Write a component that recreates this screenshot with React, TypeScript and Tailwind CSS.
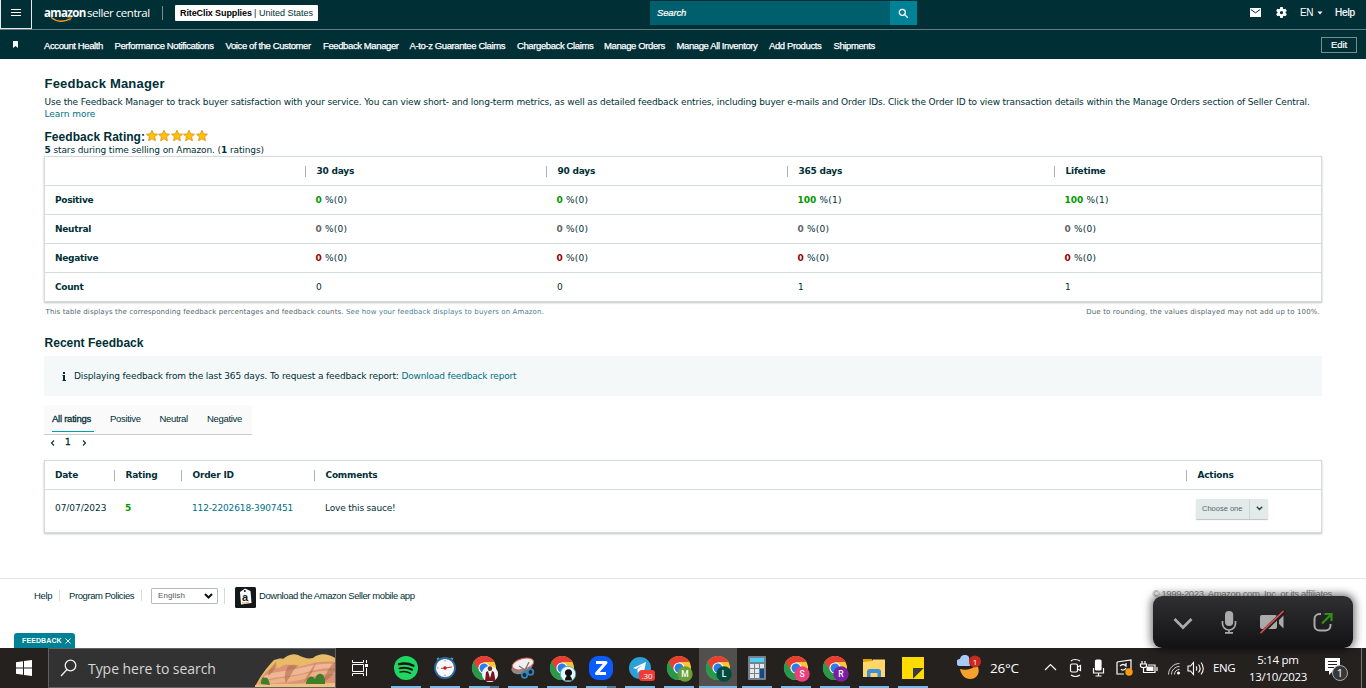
import type { ReactNode } from "react";
import clsx from "clsx";

const NAV = [
    { label: "Account Health", w: "w-[70.5px]" },
    { label: "Performance Notifications", w: "w-[111px]" },
    { label: "Voice of the Customer", w: "w-[97.5px]" },
    { label: "Feedback Manager", w: "w-[86.5px]" },
    { label: "A-to-z Guarantee Claims", w: "w-[107.5px]" },
    { label: "Chargeback Claims", w: "w-[87px]" },
    { label: "Manage Orders", w: "w-[72.5px]" },
    { label: "Manage All Inventory", w: "w-[92.5px]" },
    { label: "Add Products", w: "w-[64.5px]" },
    { label: "Shipments", w: "w-[60px]" },
];

const PERIODS = ["30 days", "90 days", "365 days", "Lifetime"];

const RATINGS = [
    { label: "Positive", color: "text-[#009900]", values: ["0", "0", "100", "100"], counts: [0, 0, 1, 1] },
    { label: "Neutral", color: "text-[#666666]", values: ["0", "0", "0", "0"], counts: [0, 0, 0, 0] },
    { label: "Negative", color: "text-[#990000]", values: ["0", "0", "0", "0"], counts: [0, 0, 0, 0] },
];

const COUNTS = [0, 0, 1, 1];

const SUMMARY_GRID = "grid grid-cols-[260px_241px_241px_267px_1fr] items-center";
const FEEDBACK_GRID = "grid grid-cols-[69px_67px_133px_872px_1fr] items-center";

function HeadCell({ children }: { children: ReactNode }) {
    return (
        <div className="h-[11px] border-l border-[#a9b4b4] pl-[10.5px] leading-[11px] font-bold tracking-[-0.22px]">{children}</div>
    );
}

function Star() {
    return (
        <svg width="12.6" height="12" viewBox="0 0 12.6 12">
            <path
                d="M6 .3 7.6 3.8l3.9.4-2.9 2.6.8 4L6 8.8l-3.4 2 .8-4L.5 4.2l3.9-.4z"
                fill="#ffc107"
                stroke="#d98e10"
                strokeWidth=".8"
                strokeLinejoin="round"
            />
        </svg>
    );
}

function TopBar() {
    return (
        <div className="flex h-[30px] border-b border-[#667b7e] text-white">
            <div className="flex h-[29px] w-[32px] items-center justify-center border-r border-b border-l border-white/90 pb-[4px]">
                <svg width="12" height="9" viewBox="0 0 12 9" stroke="#fff">
                    <path d="M1 1.5h10M1 4.5h10M1 7.5h10" />
                </svg>
            </div>
            <div className="relative ml-[12px] flex h-[25px] w-[118px] shrink-0 items-center font-['Open_Sans',sans-serif] text-[11.5px] whitespace-nowrap">
                <span className="w-[43px] font-bold tracking-[-0.62px]">amazon</span>
                <span className="tracking-[-0.45px]">seller central</span>
                <svg className="absolute top-[16px] left-[6px]" width="23" height="7" viewBox="0 0 23 7" fill="none" stroke="#f29b2c">
                    <path d="M1 1.5C7 6.3 14.5 6 20 2.8" strokeWidth="1.5" />
                    <path d="M17.5 1.3c2-.5 3.5-.6 3.6 0 .1.7-.5 2-1.3 3.1" strokeWidth="1" />
                </svg>
            </div>
            <div className="mt-[6px] h-[14px] w-px bg-[#7b8c8e]" />
            <div className="mt-[5px] ml-[12px] flex h-[16px] w-[143px] items-center rounded-[1px] bg-white pl-[5px] font-['Liberation_Sans',sans-serif] text-[9px] whitespace-nowrap text-[#002f36]">
                <b className="w-[74px] tracking-[-0.1px] text-black">RiteClix Supplies</b>
                <span className="w-[5px]">|</span>
                <span>United States</span>
            </div>
            <div className="mt-px ml-[332px] flex h-[24px] w-[240px] items-center bg-[#005f6d] pl-[7px] font-['Liberation_Sans',sans-serif] text-[9.5px] tracking-[-0.15px] italic [-webkit-text-stroke:0.2px_white]">
                Search
            </div>
            <div className="mt-px flex h-[24px] w-[27px] items-center justify-center bg-[#008296]">
                <svg width="11" height="11" viewBox="0 0 11 11" fill="none" stroke="#fff" strokeWidth="1.3">
                    <circle cx="4.3" cy="4.3" r="3" />
                    <path d="m6.5 6.5 3.3 3.3" />
                </svg>
            </div>
            <div className="ml-auto flex h-[25px] items-center pr-[11px] font-['Liberation_Sans',sans-serif] text-[10px] tracking-[-0.3px]">
                <svg width="11" height="9" viewBox="0 0 11 9">
                    <path d="M0 0h11v9H0z" fill="#fff" />
                    <path d="m.8 1.5 4.7 3.3 4.7-3.3" stroke="#002f36" fill="none" />
                </svg>
                <svg className="ml-[14px]" width="13" height="13" viewBox="0 0 24 24">
                    <path
                        fill="#fff"
                        d="M19.4 13a7.5 7.5 0 0 0 0-2l2.5-1.9-2.4-4.2-2.9 1.2a7.3 7.3 0 0 0-1.8-1L14.4 2H9.6l-.4 3.1a7.3 7.3 0 0 0-1.8 1L4.5 4.9 2.1 9.1 4.6 11a7.5 7.5 0 0 0 0 2l-2.5 1.9 2.4 4.2 2.9-1.2c.6.4 1.2.8 1.8 1l.4 3.1h4.8l.4-3.1c.6-.2 1.2-.6 1.8-1l2.9 1.2 2.4-4.2zM12 15a3 3 0 1 1 0-6 3 3 0 0 1 0 6z"
                    />
                </svg>
                <span className="ml-[12px] w-[17px]">EN</span>
                <svg width="6" height="4" viewBox="0 0 6 4">
                    <path d="M.5.5h5L3 3.5z" fill="#fff" />
                </svg>
                <span className="ml-[12px] w-[20px] tracking-[-0.15px] [-webkit-text-stroke:0.2px_white]">Help</span>
            </div>
        </div>
    );
}

function NavBar() {
    return (
        <div className="flex h-[29px] items-center font-['Liberation_Sans',sans-serif] text-[9.5px] tracking-[-0.39px] whitespace-nowrap text-white">
            <svg className="mr-[26px] ml-[13px]" width="5" height="7" viewBox="0 0 5 7">
                <path d="M0 0h5v7L2.5 5 0 7z" fill="#fff" />
            </svg>
            <div className="flex pt-[2px] [-webkit-text-stroke:0.25px_white]">
                {NAV.map((item) => (
                    <span key={item.label} className={item.w}>
                        {item.label}
                    </span>
                ))}
            </div>
            <div className="mr-[9px] ml-auto flex h-[16px] w-[36px] items-center justify-center border border-[#7b8c8e] tracking-[-0.1px] [-webkit-text-stroke:0.2px_white]">
                Edit
            </div>
        </div>
    );
}

function SummaryTable() {
    return (
        <div className="h-[146px] w-[1278px] border border-[#d5dbdb] shadow-[0_1px_2px_rgba(0,0,0,0.25)]">
            <div className={clsx(SUMMARY_GRID, "h-[28px]")}>
                <div />
                {PERIODS.map((p) => (
                    <HeadCell key={p}>{p}</HeadCell>
                ))}
            </div>
            {RATINGS.map((r) => (
                <div key={r.label} className={clsx(SUMMARY_GRID, "h-[29px] border-t border-[#d5dbdb]")}>
                    <b className="pl-[10px] tracking-[-0.28px]">{r.label}</b>
                    {r.values.map((v, i) => (
                        <div key={PERIODS[i]} className="pl-[10.5px] tracking-[0.25px]">
                            <b className={clsx("tracking-normal", r.color)}>{v}</b> %({r.counts[i]})
                        </div>
                    ))}
                </div>
            ))}
            <div className={clsx(SUMMARY_GRID, "h-[29px] border-t border-[#d5dbdb]")}>
                <b className="pl-[10px] tracking-[-0.28px]">Count</b>
                {COUNTS.map((c, i) => (
                    <div key={PERIODS[i]} className="pl-[11px]">
                        {c}
                    </div>
                ))}
            </div>
        </div>
    );
}

function FeedbackTable() {
    return (
        <div className="h-[73px] w-[1278px] border border-[#d5dbdb] shadow-[0_1px_2px_rgba(0,0,0,0.25)]">
            <div className={clsx(FEEDBACK_GRID, "h-[28px]")}>
                <b className="pl-[10px] tracking-[-0.22px]">Date</b>
                <HeadCell>Rating</HeadCell>
                <HeadCell>Order ID</HeadCell>
                <HeadCell>Comments</HeadCell>
                <HeadCell>Actions</HeadCell>
            </div>
            <div className={clsx(FEEDBACK_GRID, "h-[43px] border-t border-[#d5dbdb] pb-[6px]")}>
                <span className="pl-[10px] tracking-[-0.05px]">07/07/2023</span>
                <b className="pl-[11px] text-[#009900]">5</b>
                <span className="pl-[11px] tracking-[-0.14px] text-[#007185]">112-2202618-3907451</span>
                <span className="pl-[11px] tracking-[-0.18px]">Love this sauce!</span>
                <div className="mt-px ml-[10px] flex h-[20px] w-[72px] items-center rounded-[1px] bg-[#e3eaea] font-['Liberation_Sans',sans-serif] text-[7.5px] text-[#56686b] shadow-[0_1px_1px_rgba(0,0,0,0.25)]">
                    <span className="w-[53px] pl-[6px]">Choose one</span>
                    <span className="flex h-full w-[19px] items-center justify-center border-l border-[#cfd8d8]">
                        <svg width="7" height="5" viewBox="0 0 7 5" fill="none" stroke="#23444a" strokeWidth="1.4">
                            <path d="m.8.8 2.7 2.7L6.2.8" />
                        </svg>
                    </span>
                </div>
            </div>
        </div>
    );
}

function Footer() {
    return (
        <footer className="flex h-[38px] items-center border-t border-[#e3e6e6] font-['Liberation_Sans',sans-serif] text-[9.5px] tracking-[-0.42px] whitespace-nowrap text-[#002f36]">
            <span className="mb-[4px] ml-[34px] w-[25px] tracking-[-0.3px]">Help</span>
            <span className="mb-[4px] h-[11px] w-[82px] border-l border-[#d5dbdb] pl-[9px] leading-[11px]">Program Policies</span>
            <span className="mb-[4px] h-[11px] w-[10px] border-l border-[#d5dbdb]" />
            <div className="mb-[3px] flex h-[16px] w-[67px] items-center justify-between rounded-[1px] border border-[#b5bcbc] pr-[4px] pl-[6px] text-[8px] text-[#555]">
                <span className="tracking-[0.1px]">English</span>
                <svg width="9" height="6" viewBox="0 0 9 6" fill="none" stroke="#111" strokeWidth="2">
                    <path d="m1 1 3.5 3.5L8 1" />
                </svg>
            </div>
            <span className="mb-[4px] ml-[6px] h-[16px] w-[11px] border-l border-[#d5dbdb]" />
            <svg width="21" height="21" viewBox="0 0 21 21">
                <rect width="21" height="21" rx="1.5" fill="#15181b" />
                <path d="m5 5 5-3.500L15.500 4l1 12-10.500 1.500z" fill="#fff" />
                <circle cx="9.8" cy="4" r="1" fill="#15181b" />
                <text x="7" y="13.5" fontSize="11" fontWeight="bold" fontFamily="Liberation Sans" fill="#15181b">
                    a
                </text>
                <path d="M7 15.5c2.5 1 5 .7 7-.7" stroke="#f29b2c" fill="none" />
            </svg>
            <span className="mb-[4px] ml-[3px]">Download the Amazon Seller mobile app</span>
            <span className="mr-[34px] mb-[8px] ml-auto tracking-[-0.36px] text-[#888]">
                © 1999-2023, Amazon.com, Inc. or its affiliates
            </span>
        </footer>
    );
}

function CallWidget() {
    return (
        <div className="absolute top-[596px] left-[1153px] flex h-[52px] w-[200px] items-center rounded-[9px] bg-linear-to-b from-[#303033] to-[#131315] shadow-[0_0_8px_2px_rgba(0,0,0,0.55)]">
            <svg width="200" height="52" viewBox="0 0 200 52" fill="none">
                <path d="m21.5 23 8.5 8.5L38.5 23" stroke="#aaa" strokeWidth="2.7" />
                <rect x="72" y="15" width="8.2" height="15" rx="4.1" fill="#aaa" />
                <path d="M69.5 25v2.500a6.5 6.5 0 0 0 13 0V25M76 34v3M72 36.800h8" stroke="#aaa" strokeWidth="1.7" />
                <rect x="107" y="19" width="17" height="14" rx="2" fill="#aaa" />
                <path d="m126 24 4.5-4.500v13L126 28z" fill="#aaa" />
                <path d="m107.5 38 24-23" stroke="#202022" strokeWidth="3.5" />
                <path d="m107.5 37 23-22" stroke="#f05050" strokeWidth="1.5" />
                <path d="M168 18h-1.500a5 5 0 0 0-5 5v6.500a5 5 0 0 0 5 5h6a5 5 0 0 0 5-5V28" stroke="#aaa" strokeWidth="2" />
                <path d="m169 27.5 8.5-8.500M171.500 18h7v7" stroke="#33900f" strokeWidth="2.2" />
            </svg>
        </div>
    );
}

function Chrome({ badge, color }: { badge?: string; color?: string }) {
    return (
        <svg width="28" height="26" viewBox="-1 0 28 26">
            <circle cx="12" cy="12" r="12" fill="#fbc533" />
            <path d="M12 12 1.6 6A12 12 0 0 1 22.4 6H12z" fill="#e53e32" />
            <path d="M1.6 6A12 12 0 0 0 12 24l5.2-9L12 12 7 15z" fill="#27994b" />
            <path d="m1.6 6 5.2 9L12 12V6z" fill="#e53e32" />
            <path d="M1.6 6 7 15l5 3.5L12 24A12 12 0 0 1 1.6 6z" fill="#27994b" />
            <circle cx="12" cy="12" r="5.6" fill="#fff" />
            <circle cx="12" cy="12" r="4.5" fill="#2b7de9" />
            {badge && (
                <>
                    <circle cx="18" cy="18" r="7.7" fill={color} />
                    <text x="18" y="21" textAnchor="middle" fontSize="8.5" fontWeight="500" fontFamily="Roboto" fill="#fff">
                        {badge}
                    </text>
                </>
            )}
            {!badge && color && (
                <>
                    <circle cx="18" cy="18" r="7.7" fill="#eef8fa" stroke={color} strokeWidth=".8" />
                    {color === "#f5f5f5" ? (
                        <>
                            <path d="m13 25 1-9 4-2 4 2 1.5 9z" fill="#7c1523" />
                            <path d="m16 15 2 7 2-7z" fill="#fff" />
                            <circle cx="18" cy="12.5" r="2.3" fill="#5b3d31" />
                        </>
                    ) : (
                        <path d="M15 24.5c0-2 .5-3.500 2-4.500a3.600 3.600 0 1 1 3 0c1.200 1 2 2 2 4.500z" fill="#111" />
                    )}
                </>
            )}
        </svg>
    );
}

const APPS: { id: string; icon: ReactNode; active?: boolean; group?: boolean }[] = [
    {
        id: "spotify",
        icon: (
            <svg width="28" height="26" viewBox="0 0 28 26" fill="none" stroke="#191414" strokeLinecap="round">
                <circle cx="13" cy="12" r="12" fill="#1ed760" stroke="none" />
                <path d="M6 8.2c5-1.3 10-.8 14.5 1.6" strokeWidth="2.3" />
                <path d="M6.5 12.3c4.5-1.2 8.5-.7 12.5 1.4" strokeWidth="1.9" />
                <path d="M7 16c4-.9 7.3-.5 10.5 1.3" strokeWidth="1.5" />
            </svg>
        ),
    },
    {
        id: "clock",
        icon: (
            <svg width="28" height="26" viewBox="0 0 28 26">
                <path d="m5 3.5 2-1.5M21 3.5 19 2" stroke="#5d8fba" strokeWidth="2" />
                <circle cx="13" cy="12" r="10" fill="#f6f7f8" stroke="#2f68a1" strokeWidth="1.8" />
                <path d="M13 4v1.5M13 18.5V20M5 12h1.5" stroke="#888" />
                <path d="m9 12.5 11-1.5" stroke="#d6322b" strokeWidth="1.2" />
                <circle cx="13" cy="12" r="1.7" fill="#b8221d" />
            </svg>
        ),
    },
    { id: "chrome-photo", icon: <Chrome color="#f5f5f5" />, group: true },
    {
        id: "snip",
        icon: (
            <svg width="28" height="26" viewBox="0 0 28 26" fill="none">
                <ellipse cx="12" cy="11" rx="11" ry="6.5" fill="#8b8b8b" transform="rotate(-20 12 11)" />
                <ellipse cx="13" cy="8" rx="11" ry="5.5" fill="#f0f0f0" stroke="#d45b50" transform="rotate(-15 13 8)" />
                <path d="m9 10 9 6M19 6l-5 10" stroke="#777" strokeWidth="1.3" />
                <circle cx="14.5" cy="19" r="2.8" stroke="#2f86bd" strokeWidth="1.8" />
                <circle cx="20.5" cy="16" r="2.8" stroke="#2f86bd" strokeWidth="1.8" />
            </svg>
        ),
    },
    { id: "chrome-key", icon: <Chrome color="#39a9bd" /> },
    {
        id: "zoom",
        icon: (
            <svg width="28" height="26" viewBox="0 0 28 26">
                <rect x="1" width="24" height="24" rx="9" fill="#0b5cff" />
                <path d="M8 6.5h10L8.5 17.5H18" fill="none" stroke="#fff" strokeWidth="3" strokeLinejoin="round" />
            </svg>
        ),
        group: true,
    },
    {
        id: "telegram",
        icon: (
            <svg width="28" height="26" viewBox="-1 0 28 26">
                <circle cx="12" cy="12" r="11" fill="#2ca0d9" />
                <path d="m5 12 13-6-2.5 12-4-3-2 2v-4l5-4-6.5 4z" fill="#fff" />
                <rect x="11" y="14" width="16" height="11" rx="3" fill="#ef3b36" />
                <text x="19" y="22.5" textAnchor="middle" fontSize="8" fontFamily="Open Sans" fill="#fff">
                    .30
                </text>
            </svg>
        ),
    },
    { id: "chrome-m", icon: <Chrome badge="M" color="#689f38" /> },
    { id: "chrome-l", icon: <Chrome badge="L" color="#004d40" />, active: true },
    {
        id: "calculator",
        icon: (
            <svg width="28" height="26" viewBox="0 0 28 26">
                <rect x="4" width="18" height="24" rx="1" fill="#76818b" />
                <rect x="6" y="2" width="14" height="4" fill="#4dd0f5" />
                <path d="M6 8h4v4H6zM11 8h4v4h-4zM16 8h4v4h-4zM6 13h4v4H6zM11 13h4v4h-4zM6 18h4v4H6zM11 18h4v4h-4z" fill="#e4e8eb" />
                <path d="M16 13h4v9h-4z" fill="#114b8c" />
            </svg>
        ),
    },
    { id: "chrome-s", icon: <Chrome badge="S" color="#ec407a" /> },
    { id: "chrome-r", icon: <Chrome badge="R" color="#7b1fa2" /> },
    {
        id: "explorer",
        icon: (
            <svg width="28" height="26" viewBox="0 0 28 26">
                <path d="M2 3h9v4H2z" fill="#e0a000" />
                <path d="M2 6 11 5l1-1.5h12V21H2z" fill="#ffd667" />
                <path d="M6 21v-6.5L8 13h10l2 1.5V21h-3.5v-4h-7v4z" fill="#3c91dc" />
            </svg>
        ),
    },
    {
        id: "sticky-notes",
        icon: (
            <svg width="28" height="26" viewBox="0 0 28 26">
                <path d="M2 1h22v22H2z" fill="#ffdc00" />
                <path d="M13 12h11L13 23z" fill="#3b3b3b" />
                <path d="M24 12v11H13z" fill="#ffdc00" />
            </svg>
        ),
    },
];

function SearchArt() {
    return (
        <svg className="absolute right-0 bottom-0" width="80" height="33" viewBox="0 0 80 33">
            <path d="M0 33C4 24 12 13 19 6c4-1 7-2 9-1 4-3 8-6 15-4 6 3 10 4 15 3 6-5 14-5 22 0v29z" fill="#e9bb69" />
            <path d="M7 23C12 16 17 13 24 14c8-6 12-3 18-1 12-2 22-7 38-5v25H2z" fill="#dc9376" />
            <path d="M9 22c10-5 18-4 27-6 12-2 22-7 44-6v4c-17-1-27 5-41 7-9 2-20 2-32 6z" fill="#efb796" />
            <path d="M5 29c10-4 24-5 35-7 12-2 22-6 40-5v3c-17-1-27 5-41 7-9 2-20 2-35 4z" fill="#ebb289" />
            <path
                d="M14 16 21 8c2 4-3 10-8 14zM33 12c5-2 8-1 11-1-6 4-7 9-13 18-3-6 0-13 2-17zM61 8c-5 8-9 13-12 20 6-5 10-12 12-20zM80 8c-6 4-9 12-12 20 5-2 9-6 12-10z"
                fill="#ad6848"
                opacity=".55"
            />
            <path d="M0 33v-2c25-2 55-1 80-2v4z" fill="#eec27e" />
            <path d="M6 30c0-5 2-8 4-6 2-2 4 2 5 7zM51 30c1-9 7-9 9-5 2-7 8-7 10 0v5z" fill="#3f7f2c" />
        </svg>
    );
}

function Tray() {
    return (
        <div className="ml-auto flex h-full items-center">
            <svg width="25" height="26" viewBox="0 0 25 26">
                <path d="M3 14c6 2 12 0 17-4 4 6 1 14-7 14-5 0-9-4-10-10z" fill="#f5a12c" />
                <path d="M3 11a3.5 3.5 0 0 1 0-7 5 5 0 0 1 9-2l1 9z" fill="#a8c8f5" />
                <circle cx="18" cy="6.5" r="6" fill="#c92a20" />
                <text x="18" y="9.5" textAnchor="middle" fontSize="8" fontFamily="Open Sans" fill="#fff">
                    1
                </text>
            </svg>
            <span className="ml-[8px] w-[54px] text-[13.5px] tracking-[-0.2px]">26°C</span>
            <svg width="170" height="24" viewBox="0 0 170 24" fill="none" stroke="#fff" strokeWidth="1.2">
                <path d="m1 14 5.5-5.5L12 14" />
                <rect x="26.5" y="8" width="7" height="8" rx="1.5" />
                <path d="m33.5 11 3-1.5v5l-3-1.5M27 5c2-2 6-2 9 0M27 19c3 2 6 2 9 0" />
                <rect x="51.5" y="4" width="5.5" height="10" rx="1" fill="#fff" />
                <path d="M49.5 12v5h10v-5M54.5 17v3M51.5 20h6" />
                <path d="m73 6 14-2v9M73 6v12h7M76 10c2-2 4-2 6 0V7M82 12c-1 2-4 3-5 1" />
                <circle cx="85" cy="16" r="3.7" fill="#ff9b0a" stroke="none" />
                <path d="M98 5v3M101 5v3M96.5 8h6v2c0 2-6 2-6 0zM99.5 12v4.5H111V9h-7M113 11v4" />
                <path d="M102.5 10.5h7v4.5h-7z" fill="#fff" stroke="none" />
                <path d="M124.5 18.5c0-6 5-11 11-11M127.5 18.5c0-4.5 3.5-8 8-8M130.5 18.5c0-3 2-5 5-5" opacity=".8" strokeWidth="1" />
                <circle cx="134.5" cy="17" r="1.5" fill="#fff" stroke="none" />
                <path
                    d="M144 10h2.5l3-3.5v12l-3-3.5H144zM152 10.5c1 1 1 3 0 4M154.5 8.5c2 2.500 2 5.500 0 8M157 6.500c3 3.500 3 8.500 0 12"
                    strokeWidth="1.1"
                />
            </svg>
            <span className="-ml-px w-[30px] text-[11.5px] tracking-[-0.35px]">ENG</span>
            <div className="flex w-[65px] flex-col items-center pl-[5px] text-[11.5px] leading-[17px] tracking-[-0.3px] whitespace-nowrap">
                <span>5:14 pm</span>
                <span>13/10/2023</span>
            </div>
            <svg className="ml-[16px]" width="26" height="28" viewBox="0 0 26 28">
                <path d="M1 4h15v13H9l-4 4v-4H1z" fill="#fff" />
                <path d="M4 7.5h9M4 10.5h9M4 13.5h6" stroke="#24211f" strokeWidth="1.1" />
                <circle cx="16" cy="19" r="7.5" fill="#35383a" stroke="#aaa" />
                <text x="16" y="23" textAnchor="middle" fontSize="11" fontFamily="Open Sans" fill="#fff">
                    1
                </text>
            </svg>
            <span className="mr-[4px] ml-[11px] h-full w-px bg-[#777]" />
        </div>
    );
}

function Taskbar() {
    return (
        <div className="relative flex h-[40px] items-center bg-[#24211f] font-['Open_Sans',sans-serif] text-white">
            <svg className="ml-[16px]" width="32" height="16" viewBox="0 0 32 16">
                <path d="M0 2.2 7 1.2V7.5H0zM8 1l8-1v7.5H8zM0 8.5h7v6.3l-7-1zM8 8.5h8V16l-8-1.1z" fill="#fff" />
            </svg>
            <div className="relative flex h-full w-[288px] items-center border border-[#606060] bg-[#323232] pl-[11px]">
                <svg width="17" height="18" viewBox="0 0 17 18" fill="none" stroke="#f2f2f2" strokeWidth="1.3">
                    <circle cx="10.5" cy="6.5" r="5.3" />
                    <path d="M7 10.5 1 17" />
                </svg>
                <span className="ml-[11px] pt-px text-[14px] tracking-[-0.05px] whitespace-nowrap text-[#d6d6d6]">Type here to search</span>
                <SearchArt />
            </div>
            <svg className="mr-[18px] ml-[16px]" width="17" height="16" viewBox="0 0 17 16" fill="none" stroke="#fff">
                <path d="M.5 0v2.5h11V0M.5 4.5h11v7H.5zM.5 16v-2.5h11V16M14.5 0v3M14.5 8v8" />
                <path d="M13 4h3v3h-3z" fill="#fff" stroke="none" />
            </svg>
            <div className="flex h-full gap-px">
                {APPS.map((app) => (
                    <div
                        key={app.id}
                        className={clsx("relative flex h-full w-[38px] items-start justify-center pt-[8px] pl-[2px]", app.active && "bg-[#51504f]")}
                    >
                        {app.icon}
                        <span
                            className={clsx(
                                "absolute bottom-0 h-[2px] bg-[#76b9ed]",
                                app.active ? "left-0 w-full" : "left-[4px] w-[30px]",
                                app.group && "border-r-[9px] border-[#527b9b]",
                            )}
                        />
                    </div>
                ))}
            </div>
            <Tray />
        </div>
    );
}

export default function App() {
    return (
        <div className="relative flex h-[688px] w-[1366px] flex-col overflow-hidden bg-white font-['DejaVu_Sans',sans-serif] text-[9px] leading-[12px] text-[#002f36]">
            <header className="h-[59px] bg-[#002f36]">
                <TopBar />
                <NavBar />
            </header>

            <main className="h-[519px] pl-[44px] whitespace-nowrap">
                <h1 className="h-[37px] pt-[17px] pl-[0.5px] font-['Liberation_Sans',sans-serif] text-[13px] leading-[16px] font-bold tracking-[0.2px]">
                    Feedback Manager
                </h1>
                <p className="h-[33px] pl-[0.5px] tracking-[-0.137px]">
                    Use the Feedback Manager to track buyer satisfaction with your service. You can view short- and long-term metrics, as well
                    as detailed feedback entries, including buyer e-mails and Order IDs. Click the Order ID to view transaction details within
                    the Manage Orders section of Seller Central.
                    <br />
                    <span className="tracking-[-0.05px] text-[#007185]">Learn more</span>
                </p>
                <div className="flex h-[15px] items-center pl-[0.5px] font-['Liberation_Sans',sans-serif] text-[12px] font-bold tracking-[0.03px]">
                    <span className="w-[101px]">Feedback Rating:</span>
                    <span className="mb-[2px] flex">
                        {[1, 2, 3, 4, 5].map((n) => (
                            <Star key={n} />
                        ))}
                    </span>
                </div>
                <p className="h-[12px] pl-[0.5px] tracking-[-0.11px]">
                    <b>5</b> stars during time selling on Amazon. (<b>1</b> ratings)
                </p>
                <SummaryTable />
                <div className="flex h-[32px] w-[1276px] justify-between pt-[4px] pl-[1.5px] text-[7px] text-[#56686b]">
                    <span className="tracking-[0.12px]">
                        This table displays the corresponding feedback percentages and feedback counts.{" "}
                        <span className="text-[#4a7f93]">See how your feedback displays to buyers on Amazon.</span>
                    </span>
                    <span className="tracking-[0.145px]">Due to rounding, the values displayed may not add up to 100%.</span>
                </div>

                <h2 className="h-[22px] pl-[0.5px] font-['Liberation_Sans',sans-serif] text-[12px] leading-[19px] font-bold tracking-[0.02px]">
                    Recent Feedback
                </h2>
                <div className="flex h-[40px] w-[1278px] items-center bg-[#f4f8f9] pl-[18px]">
                    <svg className="mr-[7px]" width="5" height="9" viewBox="0 0 5 9" fill="#002f36">
                        <path d="M1 0h2v2H1zM.5 3H3v5h1v1H.5V8H1V4H.5z" />
                    </svg>
                    <span className="tracking-[-0.13px]">
                        Displaying feedback from the last 365 days. To request a feedback report:{" "}
                        <span className="tracking-[-0.18px] text-[#007185]">Download feedback report</span>
                    </span>
                </div>
                <div className="mt-[9px] flex h-[30px] w-[208px] border-b border-[#c8cccc] bg-[#fafafa] pl-[8px] font-['Liberation_Sans',sans-serif] text-[9.5px] leading-[28px] tracking-[-0.33px]">
                    <span className="h-[27px] w-[42px] border-b border-[#00a0b4] tracking-[-0.25px] [-webkit-text-stroke:0.3px_#002f36]">
                        All ratings
                    </span>
                    <span className="ml-[16px] w-[49.5px]">Positive</span>
                    <span className="w-[47.5px]">Neutral</span>
                    <span>Negative</span>
                </div>
                <div className="flex h-[25px] items-start gap-[10px] pt-px pl-[6px] leading-[13px]">
                    <svg className="mt-[4px]" width="5" height="6" viewBox="0 0 5 6" fill="none" stroke="#002f36" strokeWidth="1.1">
                        <path d="M4 .5 1.5 3 4 5.5" />
                    </svg>
                    <span className="w-[7px] [-webkit-text-stroke:0.3px_#002f36]">1</span>
                    <svg className="mt-[4px]" width="5" height="6" viewBox="0 0 5 6" fill="none" stroke="#002f36" strokeWidth="1.1">
                        <path d="M1 .5 3.5 3 1 5.5" />
                    </svg>
                </div>
                <FeedbackTable />
            </main>

            <Footer />
            <div className="mt-[17px] ml-[14px] flex h-[15px] w-[61px] items-center rounded-t-[3px] bg-[#008296] pl-[8px] font-['Liberation_Sans',sans-serif] text-[7px] font-bold whitespace-nowrap text-white">
                <span className="w-[43px] tracking-[0.1px]">FEEDBACK</span>
                <svg width="6" height="6" viewBox="0 0 6 6" stroke="#fff">
                    <path d="m.5.5 5 5M5.5.5l-5 5" />
                </svg>
            </div>
            <Taskbar />
            <CallWidget />
        </div>
    );
}
